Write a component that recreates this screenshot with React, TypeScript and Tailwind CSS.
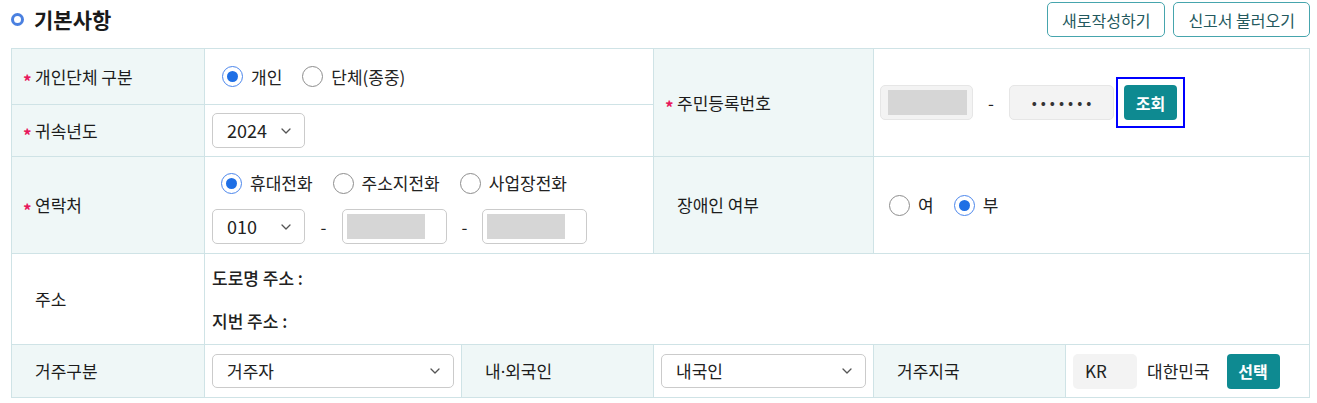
import React from "react";

const Chevron = () => (
  <svg width="10" height="6" viewBox="0 0 10 6" fill="none">
    <path d="M1 1l4 4 4-4" stroke="#555" strokeWidth="1.3" strokeLinecap="round" strokeLinejoin="round" />
  </svg>
);

const Radio = ({ checked, label }: { checked?: boolean; label: string }) => (
  <label className="flex items-center gap-2">
    {checked ? (
      <span className="w-[21px] h-[21px] rounded-full border-[1.5px] border-[#4b86ec] flex items-center justify-center bg-white">
        <span className="w-[11px] h-[11px] rounded-full bg-[#1f6fe5]" />
      </span>
    ) : (
      <span className="w-[21px] h-[21px] rounded-full border-[1.5px] border-[#8d8d8d] bg-white" />
    )}
    <span>{label}</span>
  </label>
);

const Label = ({ text, required, className = "" }: { text: React.ReactNode; required?: boolean; className?: string }) => (
  <div className={"bg-[#eff7f7] flex items-center pl-[23px] text-[#1c1c1c] " + className}>
    {required && (
      <span className="-ml-[12px] w-[12px] text-[17px] font-bold text-[#e8175d] leading-none translate-y-[4px]">*</span>
    )}
    <span>{text}</span>
  </div>
);

const Select = ({ value, className = "" }: { value: string; className?: string }) => (
  <div className={"flex items-center justify-between border border-[#cbcbcb] rounded-[5px] bg-white pl-[14px] pr-[13px] " + className}>
    <span>{value}</span>
    <Chevron />
  </div>
);

const MaskedInput = ({ className = "" }: { className?: string }) => (
  <div className={"h-[35px] border border-[#cbcbcb] rounded-[5px] bg-white p-[4px] " + className}>
    <div className="h-full w-[78px] bg-[#d6d6d6]" />
  </div>
);

export default function App() {
  return (
    <div className="w-[1317px] pl-[11px] pr-[7px] pt-[2px] bg-white text-[17px] text-[#222]" style={{ fontFamily: '"Noto Sans CJK KR", "Noto Sans", sans-serif' }}>
      <div className="flex items-center justify-between h-[35px]">
        <div className="flex items-center gap-[10px]">
          <span className="w-[13px] h-[13px] rounded-full border-[3px] border-[#4a80e0]" />
          <h2 className="text-[21px] font-bold text-[#1a1a1a]">기본사항</h2>
        </div>
        <div className="flex gap-2">
          <button className="h-[35px] px-[14px] border border-[#46a5ad] rounded-[5px] text-[16px] text-[#23595e]">새로작성하기</button>
          <button className="h-[35px] px-[14px] border border-[#46a5ad] rounded-[5px] text-[16px] text-[#23595e]">신고서 불러오기</button>
        </div>
      </div>

      <div className="mt-[11px] grid grid-cols-[192px_256px_191px_219px_191px_243px] grid-rows-[55px_51px_96px_90px_52px] gap-px bg-[#cfe3e6] border border-[#cfe3e6]">
        <Label text="개인단체 구분" required />
        <div className="col-span-2 bg-white flex items-center pl-[17px] gap-5">
          <Radio checked label="개인" />
          <Radio label="단체(종중)" />
        </div>
        <Label text="주민등록번호" required className="row-span-2" />
        <div className="col-span-2 row-span-2 bg-white flex items-center pl-[6px]">
          <div className="h-[35px] w-[93px] rounded-[5px] border border-[#e6e6e6] bg-[#f3f3f3] p-[4px] pl-[7px]">
            <div className="h-full w-[79px] bg-[#d6d6d6]" />
          </div>
          <span className="w-[36px] text-center">-</span>
          <div className="h-[35px] w-[105px] rounded-[5px] border border-[#e6e6e6] bg-[#f3f3f3] flex items-center justify-center pl-[4px] text-[15px] tracking-[4px] text-[#333]">
            •••••••
          </div>
          <div className="ml-[2px] border-2 border-[#0000ff] p-[6px]">
            <button className="block h-[35px] w-[53px] rounded-[4px] bg-[#0e8a91] text-white text-[16px] font-bold">조회</button>
          </div>
        </div>

        <Label text="귀속년도" required />
        <div className="col-span-2 bg-white flex items-center pl-[7px]">
          <Select value="2024" className="w-[93px] h-[35px] text-[18px]" />
        </div>

        <Label text="연락처" required />
        <div className="col-span-2 bg-white flex flex-col pl-[7px] pt-[15px]">
          <div className="flex items-center gap-5 pl-[9px] h-[22px]">
            <Radio checked label="휴대전화" />
            <Radio label="주소지전화" />
            <Radio label="사업장전화" />
          </div>
          <div className="mt-[15px] flex items-center">
            <Select value="010" className="w-[93px] h-[35px] text-[18px]" />
            <span className="w-[37px] text-center">-</span>
            <MaskedInput className="w-[105px]" />
            <span className="w-[35px] text-center">-</span>
            <MaskedInput className="w-[105px]" />
          </div>
        </div>
        <Label text="장애인 여부" />
        <div className="col-span-2 bg-white flex items-center pl-[15px] gap-5">
          <Radio label="여" />
          <Radio checked label="부" />
        </div>

        <Label text="주소" className="bg-white" />
        <div className="col-span-5 bg-white flex flex-col justify-center gap-[18px] pl-[7px] font-medium">
          <span>도로명 주소 :</span>
          <span>지번 주소 :</span>
        </div>

        <Label text="거주구분" />
        <div className="bg-white flex items-center px-[7px]">
          <Select value="거주자" className="w-full h-[34px]" />
        </div>
        <Label
          text={
            <>
              내<span className="font-['Noto_Sans']">·</span>외국인
            </>
          }
        />
        <div className="bg-white flex items-center px-[7px]">
          <Select value="내국인" className="w-full h-[34px]" />
        </div>
        <Label text="거주지국" />
        <div className="bg-white flex items-center pl-[7px]">
          <div className="h-[35px] w-[64px] rounded-[5px] bg-[#f3f3f3] flex items-center pl-[12px]">KR</div>
          <span className="ml-[10px]">대한민국</span>
          <button className="ml-[17px] h-[35px] w-[53px] rounded-[4px] bg-[#0e8a91] text-white text-[16px] font-bold">선택</button>
        </div>
      </div>
    </div>
  );
}
